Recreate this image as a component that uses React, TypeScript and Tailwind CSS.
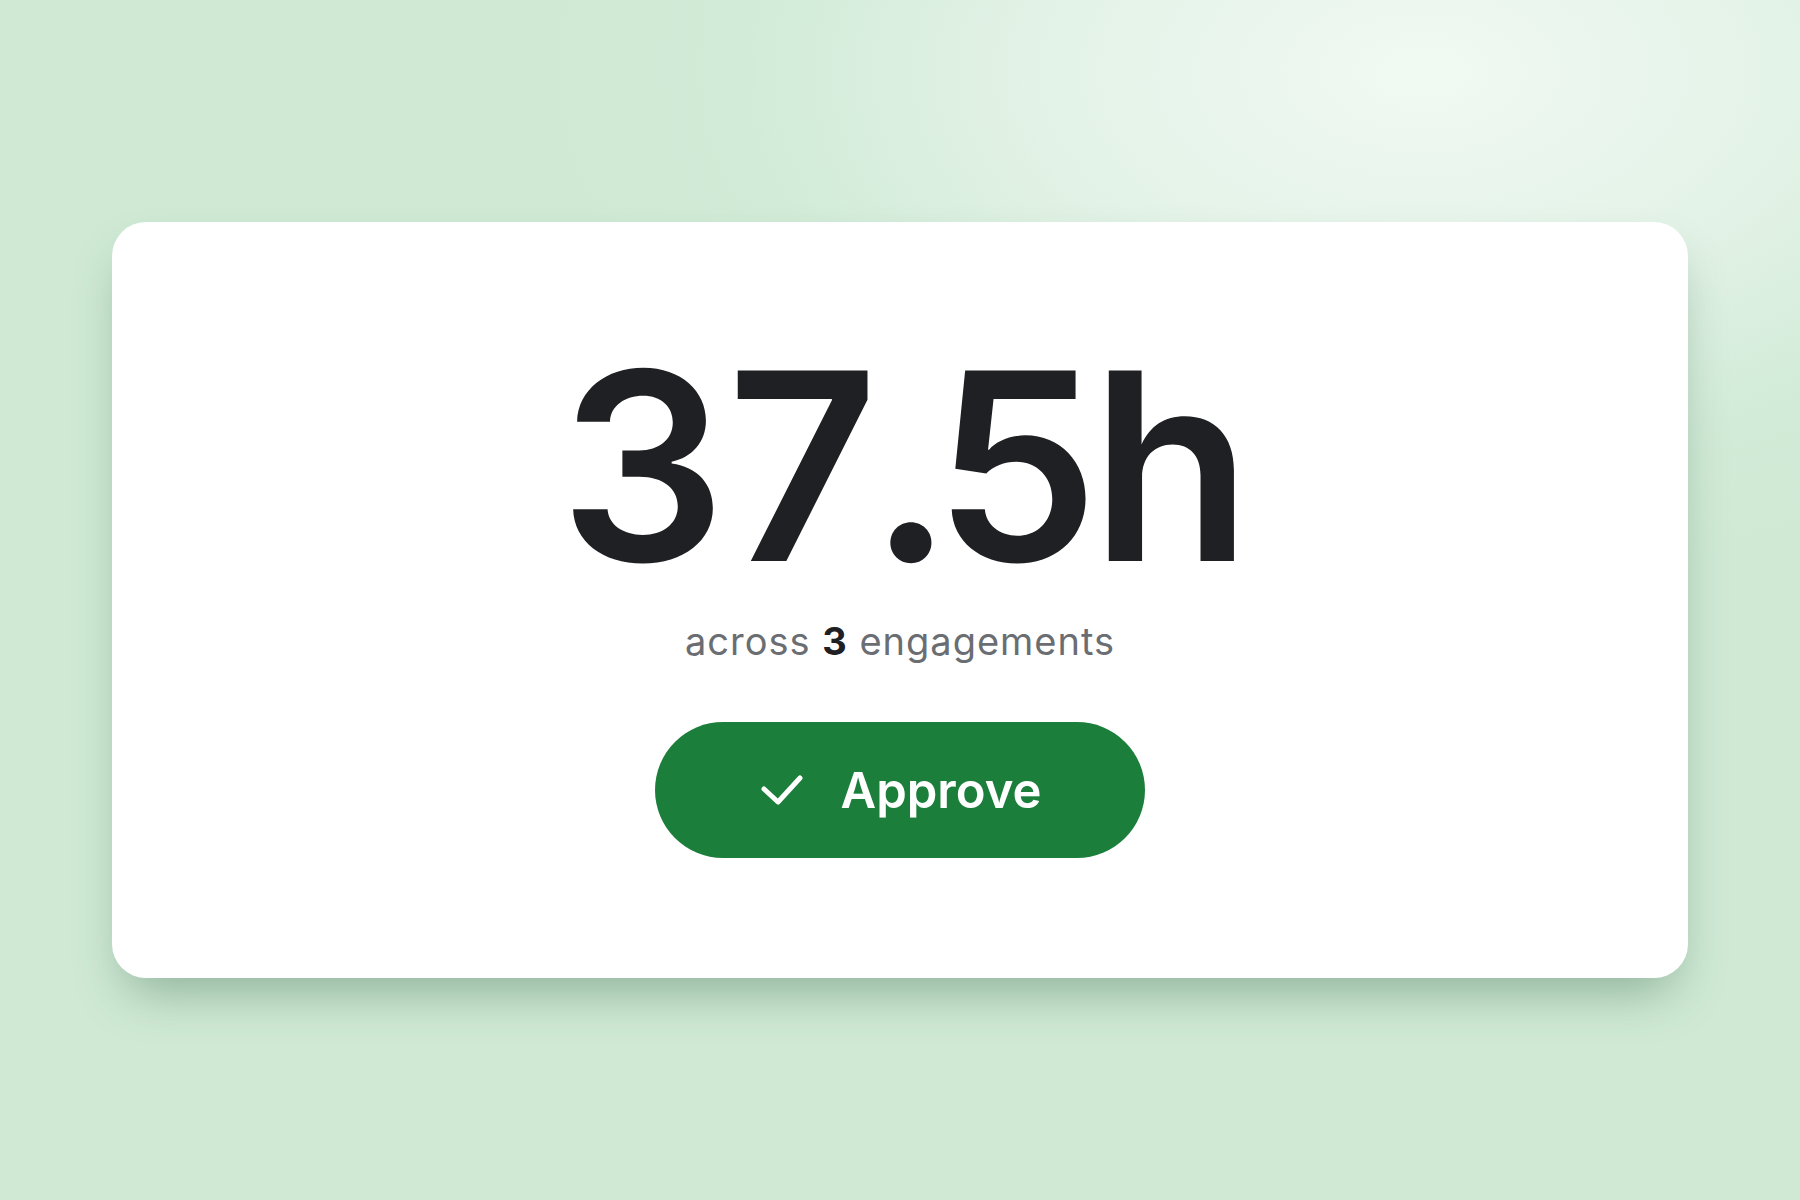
import React from "react";

export default function App() {
  return (
    <div
      className="min-h-screen w-full flex items-center justify-center px-[112px] bg-[#cfe9d5] bg-[radial-gradient(ellipse_900px_520px_at_79%_6%,#f1f9f3_0%,#e4f3e8_40%,#d2ebd8_75%,#cfe9d5_100%)]"
      style={{ fontFamily: "Inter, 'Noto Sans', sans-serif" }}
    >
      <div className="w-full h-[756px] rounded-[34px] bg-white shadow-[0_26px_50px_-14px_rgba(40,90,58,0.4)] flex flex-col items-center pt-[113px]">
        <div className="text-[262px] leading-none font-semibold tracking-[-0.046em] tabular-nums text-[#1f2023]">
          37.5h
        </div>
        <div className="mt-[25px] text-[38px] leading-none tracking-[0.026em] text-[#6a6d72]">
          across <span className="font-bold text-[#1f2023]">3</span> engagements
        </div>
        <button className="mt-[62px] w-[490px] h-[136px] rounded-full bg-[#1b7f3b] flex items-center justify-center gap-[36px] text-white">
          <svg width="46" height="34" viewBox="0 0 46 34" fill="none">
            <path
              d="M5 16 L19 29 L41 5"
              stroke="white"
              strokeWidth="5"
              strokeLinecap="round"
              strokeLinejoin="round"
            />
          </svg>
          <span className="text-[49px] leading-none font-semibold">Approve</span>
        </button>
      </div>
    </div>
  );
}
